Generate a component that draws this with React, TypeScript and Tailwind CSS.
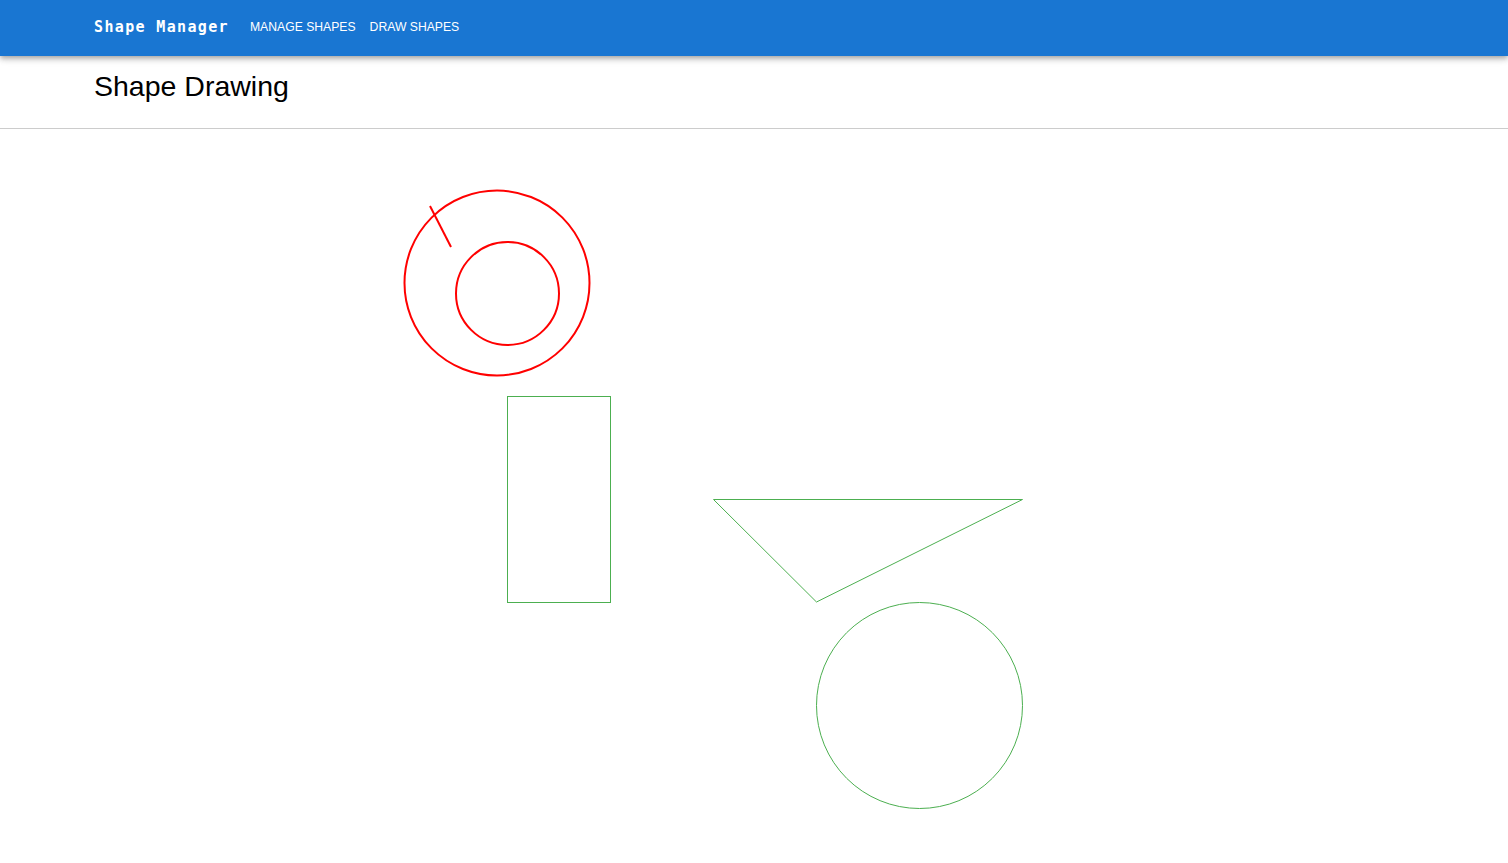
const GREEN = "#4caf50";
const RED = "#ff0000";

// canvas origin sits right under the divider (page y = 129)
const OY = 129;

function ShapeCanvas() {
  return (
    <svg width="1508" height="734" className="block" viewBox="0 0 1508 734">
      <circle cx="497" cy={283 - OY} r="92.5" fill="none" stroke={RED} strokeWidth="2" />
      <circle cx="507.5" cy={293.5 - OY} r="51.5" fill="none" stroke={RED} strokeWidth="2" />
      <line x1="430" y1={206 - OY} x2="451" y2={247 - OY} stroke={RED} strokeWidth="2" />
      <rect x="507.5" y={396.5 - OY} width="103" height="206" fill="none" stroke={GREEN} strokeWidth="1" />
      <polygon
        points={`713.5,${499.5 - OY} 1022.5,${499.5 - OY} 816.5,${602 - OY}`}
        fill="none"
        stroke={GREEN}
        strokeWidth="1"
      />
      <circle cx="919.5" cy={705.5 - OY} r="103" fill="none" stroke={GREEN} strokeWidth="1" />
    </svg>
  );
}

export default function App() {
  return (
    <div className="min-h-[863px] bg-white font-['Liberation_Sans',Arial,sans-serif]">
      <header className="relative z-10 flex h-14 items-center bg-[#1976d2] pb-[2px] pl-[94px] text-white shadow-[0_2px_4px_-1px_rgba(0,0,0,0.2),0_4px_5px_0_rgba(0,0,0,0.14),0_1px_10px_0_rgba(0,0,0,0.12)]">
        <span className="mr-[21px] font-['DejaVu_Sans_Mono',monospace] text-[15px] font-bold tracking-[1.35px]">
          Shape Manager
        </span>
        <nav className="flex gap-[14px] text-[12.2px] uppercase">
          <a>Manage Shapes</a>
          <a>Draw Shapes</a>
        </nav>
      </header>
      <div className="border-b border-[#cccccc] pb-[26px] pl-[94px] pt-[14px]">
        <h1 className="text-[28.5px] leading-[32px] text-black">Shape Drawing</h1>
      </div>
      <ShapeCanvas />
    </div>
  );
}
